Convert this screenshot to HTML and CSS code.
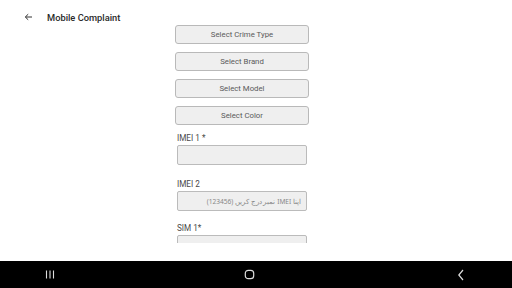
FILE: index.html
```html
<!DOCTYPE html>
<html>
<head>
<meta charset="utf-8">
<link rel="stylesheet" href="styles.css">
</head>
<body>
<div class="screen">
  <header class="topbar">
    <span class="back">
      <svg width="9" height="8" viewBox="0 0 9 8"><path d="M8 4H1.5M4.2 1.2L1.3 4l2.9 2.8" fill="none" stroke="#333" stroke-width="1"/></svg>
    </span>
    <span class="title">Mobile Complaint</span>
  </header>
  <main class="content">
    <div class="form">
      <button class="select">Select Crime Type</button>
      <button class="select">Select Brand</button>
      <button class="select">Select Model</button>
      <button class="select">Select Color</button>
      <div class="field">
        <label class="label">IMEI 1 *</label>
        <div class="input"></div>
      </div>
      <div class="field f2">
        <label class="label">IMEI 2</label>
        <div class="input rtl">اپنا IMEI نمبر درج کریں (123456)</div>
      </div>
      <div class="field f3">
        <label class="label">SIM 1*</label>
        <div class="input"></div>
      </div>
    </div>
  </main>
  <nav class="navbar">
    <span class="nav-item">
      <svg width="10" height="9" viewBox="0 0 10 9"><path d="M1.5 0.5v8M5 0.5v8M8.5 0.5v8" stroke="#ddd" stroke-width="1.1"/></svg>
    </span>
    <span class="nav-item">
      <svg width="11" height="11" viewBox="0 0 11 11"><rect x="1.3" y="1.3" width="8.4" height="8.4" rx="3" fill="none" stroke="#ddd" stroke-width="1.2"/></svg>
    </span>
    <span class="nav-item">
      <svg width="8" height="12" viewBox="0 0 8 12"><path d="M6 1L1.8 6L6 11" fill="none" stroke="#ddd" stroke-width="1.2"/></svg>
    </span>
  </nav>
</div>
</body>
</html>
```
FILE: styles.css
```css
* { box-sizing: border-box; }
html, body { margin: 0; padding: 0; }
body {
  width: 512px;
  height: 288px;
  overflow: hidden;
  background: #fff;
  font-family: Roboto, "Noto Sans", sans-serif;
}
.screen {
  display: flex;
  flex-direction: column;
  height: 288px;
}
.topbar {
  display: flex;
  align-items: center;
  padding-left: 24px;
  padding-top: 9px;
  flex: none;
  height: 25px;
}
.back {
  width: 9px;
  height: 8px;
  display: flex;
  margin-right: 14px;
}
.title {
  font-size: 9.3px;
  font-weight: 500;
  color: #2a2a2a;
}
.content {
  flex: none;
  height: 218px;
  overflow: hidden;
  padding-left: 175px;
}
.form {
  width: 134px;
  display: flex;
  flex-direction: column;
  gap: 8px;
}
.form > * { flex: none; }
.select {
  height: 19px;
  width: 134px;
  margin: 0;
  padding: 0;
  border: 1px solid #b9b9b9;
  border-radius: 3px;
  background: #efefef;
  font-family: Roboto, "Noto Sans", sans-serif;
  font-size: 7.8px;
  font-weight: 400;
  color: #5a5a5a;
  text-align: center;
}
.field {
  display: flex;
  flex-direction: column;
  padding-left: 2px;
  padding-right: 2px;
}
.f2 { margin-top: 6px; }
.f3 { margin-top: 4px; }
.label {
  font-size: 8.2px;
  color: #4a4a4a;
  height: 10px;
  line-height: 10px;
  margin-bottom: 2px;
}
.input {
  height: 20px;
  width: 130px;
  border: 1px solid #bbb;
  border-radius: 2px;
  background: #efefef;
  font-size: 7px;
  color: #888;
  display: flex;
  align-items: center;
}
.rtl {
  direction: rtl;
  padding-right: 5px;
  font-family: "Noto Sans", Roboto, sans-serif;
  font-size: 6.6px;
}
.navbar {
  margin-top: auto;
  height: 27px;
  background: #000;
  flex: none;
  display: flex;
  align-items: center;
}
.nav-item {
  display: flex;
  align-items: center;
  justify-content: center;
}
.nav-item:nth-child(1) { margin-left: 45px; }
.nav-item:nth-child(2) { margin-left: 189px; }
.nav-item:nth-child(3) { margin-left: 202px; }
```
